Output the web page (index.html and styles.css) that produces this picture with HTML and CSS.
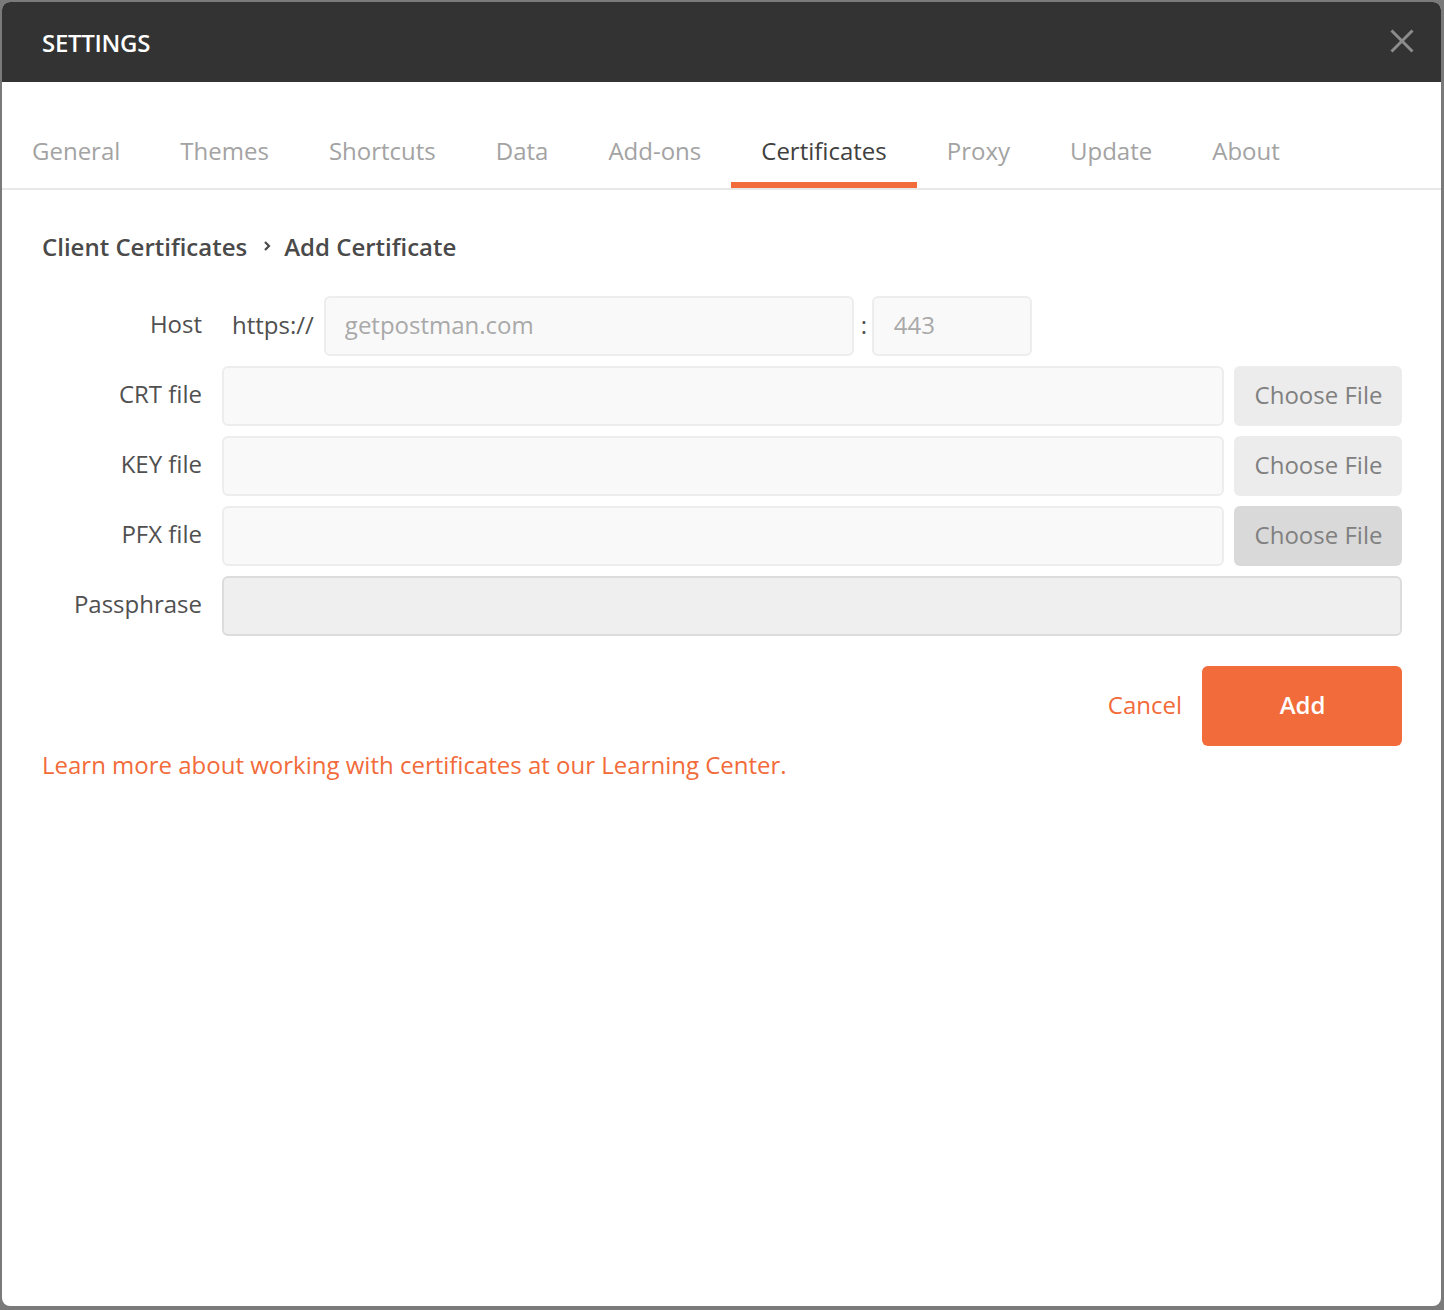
FILE: index.html
```html
<!DOCTYPE html>
<html lang="en">
<head>
<meta charset="utf-8">
<title>Settings</title>
<link rel="stylesheet" href="styles.css">
</head>
<body>
<div class="modal">
  <header class="modal-header">
    <h1 class="modal-title">SETTINGS</h1>
    <button class="close-btn" aria-label="Close">
      <svg width="24" height="24" viewBox="0 0 24 24"><path d="M1.5 1.5 L22.5 22.5 M22.5 1.5 L1.5 22.5" stroke="#8c8c8c" stroke-width="3" fill="none"/></svg>
    </button>
  </header>
  <nav class="tabs">
    <div class="tab">General</div>
    <div class="tab">Themes</div>
    <div class="tab">Shortcuts</div>
    <div class="tab">Data</div>
    <div class="tab">Add-ons</div>
    <div class="tab active">Certificates</div>
    <div class="tab">Proxy</div>
    <div class="tab">Update</div>
    <div class="tab">About</div>
  </nav>
  <main class="content">
    <div class="breadcrumb">
      <span>Client Certificates</span>
      <svg class="crumb-sep" width="8" height="12" viewBox="0 0 8 12"><path d="M2 2 L6 6 L2 10" stroke="#4a4a4a" stroke-width="2.2" fill="none"/></svg>
      <span>Add Certificate</span>
    </div>
    <form class="form">
      <label class="label">Host</label>
      <div class="field host-field">
        <span class="prefix">https://</span>
        <input class="input host-input" type="text" placeholder="getpostman.com">
        <span class="colon">:</span>
        <input class="input port-input" type="text" placeholder="443">
      </div>
      <label class="label">CRT file</label>
      <div class="field">
        <div class="input file-input"></div>
        <button type="button" class="choose-btn">Choose File</button>
      </div>
      <label class="label">KEY file</label>
      <div class="field">
        <div class="input file-input"></div>
        <button type="button" class="choose-btn">Choose File</button>
      </div>
      <label class="label">PFX file</label>
      <div class="field">
        <div class="input file-input"></div>
        <button type="button" class="choose-btn hover">Choose File</button>
      </div>
      <label class="label">Passphrase</label>
      <div class="field">
        <div class="input pass-input"></div>
      </div>
    </form>
    <div class="actions">
      <button type="button" class="cancel-btn">Cancel</button>
      <button type="button" class="add-btn">Add</button>
    </div>
    <a class="learn-link" href="#">Learn more about working with certificates at our Learning Center.</a>
  </main>
</div>
</body>
</html>
```

FILE: styles.css
```css
* { box-sizing: border-box; }
html, body { height: 100%; }
body {
  margin: 0;
  padding: 2px 3px 4px 2px;
  background: #7a7a7a;
  font-family: "Open Sans", "Liberation Sans", sans-serif;
  font-size: 24px;
  color: #505050;
}
.modal {
  height: 100%;
  background: #fff;
  border-radius: 8px;
  overflow: hidden;
  display: flex;
  flex-direction: column;
}
.modal-header {
  height: 80px;
  background: #333333;
  display: flex;
  align-items: center;
  justify-content: space-between;
  padding: 0 27px 0 40px;
  flex-shrink: 0;
}
.modal-title {
  margin: 0;
  font-size: 24px;
  font-weight: 600;
  color: #ffffff;
  letter-spacing: -0.3px;
}
.close-btn {
  background: none;
  border: 0;
  padding: 0;
  width: 24px;
  height: 24px;
  display: block;
  margin-top: -2px;
}
.close-btn svg { display: block; }
.tabs {
  display: flex;
  margin-top: 30px;
  border-bottom: 2px solid #e8e8e8;
  flex-shrink: 0;
}
.tab {
  padding: 0 30px;
  height: 76px;
  line-height: 78px;
  color: #a3a3a3;
  white-space: nowrap;
}
.tab.active {
  color: #404040;
  box-shadow: inset 0 -6px 0 #f26b3a;
}
.content {
  padding: 0 39px 0 40px;
}
.breadcrumb {
  margin-top: 40px;
  height: 32px;
  display: flex;
  align-items: center;
  font-weight: 600;
  color: #4a4a4a;
}
.crumb-sep {
  margin: 0 13px 0 16px;
  display: block;
}
.form {
  margin-top: 34px;
  display: grid;
  grid-template-columns: 160px 1fr;
  column-gap: 20px;
  row-gap: 10px;
}
.label {
  height: 60px;
  line-height: 56px;
  text-align: right;
  color: #505050;
  white-space: nowrap;
}
.field {
  display: flex;
  align-items: center;
  gap: 10px;
  height: 60px;
}
.prefix {
  padding-left: 10px;
  padding-bottom: 4px;
  color: #505050;
}
.colon {
  color: #505050;
  width: 4px;
  margin: 0 -3px;
  padding-bottom: 4px;
  text-align: center;
}
.input {
  height: 60px;
  background: #f9f9f9;
  border: 2px solid #ededed;
  border-radius: 6px;
  font-family: inherit;
  font-size: 24px;
  color: #505050;
  padding: 0 18px 3px 19px;
  outline: none;
}
.input::placeholder { color: #a9a9a9; }
.host-input { width: 530px; }
.port-input { width: 160px; padding-left: 20px; }
.file-input { flex: 1; }
.pass-input {
  flex: 1;
  background: #efefef;
  border-color: #dcdcdc;
}
.choose-btn {
  width: 168px;
  height: 60px;
  border: 0;
  border-radius: 6px;
  background: #ececec;
  color: #808080;
  font-family: inherit;
  font-size: 24px;
  padding: 0 0 4px 1px;
  flex-shrink: 0;
}
.choose-btn.hover { background: #d9d9d9; }
.actions {
  margin-top: 30px;
  display: flex;
  justify-content: flex-end;
  align-items: center;
  gap: 20px;
}
.cancel-btn {
  background: none;
  border: 0;
  padding: 0 0 4px 0;
  font-family: inherit;
  font-size: 24px;
  color: #f26b3a;
}
.add-btn {
  width: 200px;
  height: 80px;
  border: 0;
  border-radius: 6px;
  background: #f26b3a;
  color: #ffffff;
  font-family: inherit;
  font-size: 24px;
  font-weight: 600;
  padding: 0 0 4px 1px;
}
.learn-link {
  display: inline-block;
  margin-top: 3px;
  line-height: 32px;
  color: #f26b3a;
  text-decoration: none;
}
```
